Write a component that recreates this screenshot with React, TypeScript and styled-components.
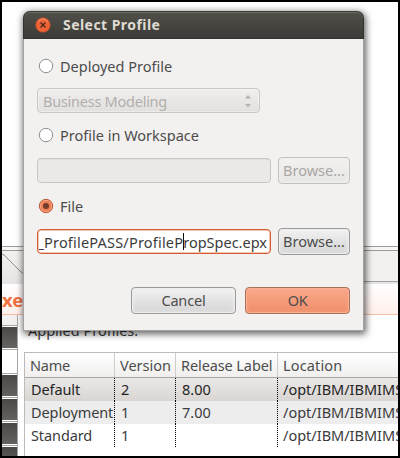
import React from "react";
import styled, { createGlobalStyle, css } from "styled-components";

const Global = createGlobalStyle`
  *, *::before, *::after { box-sizing: border-box; }
  body { margin: 0; overflow: hidden; background: #000; font-family: "Noto Sans", "Open Sans", sans-serif; font-size: 14.5px; color: #4c4c4c; }
  button { font: inherit; color: inherit; margin: 0; padding: 0; }
`;

const Screen = styled.main`
  position: relative;
  width: 400px;
  height: 458px;
  border: 2px solid #000;
  background: #fff;
  overflow: hidden;
  display: flex;
  flex-direction: column;
`;

const Label = styled.span<{ $track?: number }>`
  white-space: pre;
  line-height: 20px;
  letter-spacing: ${(p) => p.$track ?? 0}px;
`;

/* ---- editor window behind the dialog ---- */
const EditorBlank = styled.div`
  flex: 0 0 244px;
`;
const TabStrip = styled.div`
  flex: 0 0 38px;
  border-top: 1px solid #9f9a95;
  background: #f7f6f5;
  padding-top: 3px;
`;
const TabFill = styled.div`
  height: 34px;
  border-top: 1px solid #9f9a95;
  background: linear-gradient(#f2f1f0, #e6e5e4);
  display: flex;
  justify-content: space-between;
`;
const TabRest = styled.div`
  width: 90px;
  background: #f2f1f0;
  border-bottom: 1px solid #a3a19f;
  height: 31px;
`;
const FormHeading = styled.div`
  flex: 0 0 31px;
  display: flex;
  align-items: center;
  border-bottom: 1px solid #f5bda8;
  background: linear-gradient(#fff, #fff0eb);
  color: #f0703f;
  font-weight: 700;
  font-size: 18.5px;
  padding-top: 1px;
`;
const EditorBody = styled.div`
  flex: 1;
  min-height: 0;
  display: flex;
`;
const Rail = styled.div`
  width: 16px;
  border-right: 1px solid #aaa7a3;
  display: flex;
  flex-direction: column;
  height: 141px;
  overflow: hidden;
`;
const RailHead = styled.div`
  flex: 0 0 11px;
  background: #f2f1f0;
  border-bottom: 1px solid #aaa7a3;
`;
const RailGap = styled.div`
  flex: 0 0 25px;
  border-top: 1px solid #aaa7a3;
  border-bottom: 1px solid #aaa7a3;
  width: 16px;
  background: #fff;
`;
const RailCell = styled.div<{ $line?: boolean }>`
  flex: 0 0 ${(p) => (p.$line ? 24 : 23)}px;
  border-top: 1px solid #fff;
  border-bottom: 1px solid ${(p) => (p.$line ? "#aaa7a3" : "#fff")};
  background: linear-gradient(#4a4947, #656361);
  background-clip: padding-box;
  box-shadow: ${(p) => (p.$line ? "inset 0 -1px #fff" : "none")};
`;
const Content = styled.section`
  flex: 1;
  padding-left: 6px;
  display: flex;
  flex-direction: column;
  min-width: 0;
`;
const Caption = styled.div`
  height: 37px;
  padding: 5px 0 0 4px;
  color: #3c3c3c;
`;

/* ---- profile table ---- */
const Table = styled.div`
  flex: 1;
  border: solid #bdbbb8;
  border-width: 1px 0 0 1px;
`;
const Columns = css`
  display: grid;
  grid-template-columns: 90px 61px 102px 1fr;
`;
const HeaderRow = styled.div`
  ${Columns}
  height: 25px;
  border-bottom: 1px solid #a8a5a1;
  background: linear-gradient(#fff, #f0efee);
`;
const HeaderCell = styled.div`
  padding: 2px 0 0 5px;
  overflow: hidden;
  border-right: 1px solid #cfcdca;
  white-space: nowrap;
  &:last-child { border-right: 0; }
`;
const Row = styled.div<{ $tone: "selected" | "alt" | "plain" }>`
  ${Columns}
  height: 23px;
  color: ${(p) => (p.$tone === "selected" ? "#252525" : "#3c3c3c")};
  background: ${(p) =>
    ({ selected: "linear-gradient(#ebe9e8, #d8d5d2)", alt: "#ededed", plain: "#fff" })[p.$tone]};
`;
const Cell = styled.div`
  padding: 1px 0 0 6px;
  overflow: hidden;
  white-space: nowrap;
  background: repeating-linear-gradient(#000 0 1px, transparent 1px 2px) right / 1px 100% no-repeat;
  &:last-child { background: none; padding-left: 5px; }
`;

/* ---- dialog ---- */
const Dialog = styled.div`
  position: absolute;
  left: 21px;
  top: 9px;
  width: 341px;
  height: 320px;
  border-radius: 7px 7px 0 0;
  background: #f2f1f0;
  border: 1px solid #a4a19e;
  border-top: 0;
  box-shadow: 1px 2px 7px 1px rgba(0, 0, 0, 0.62);
`;
const TitleBar = styled.header`
  height: 28px;
  margin: 0 -1px;
  border-radius: 7px 7px 0 0;
  background: linear-gradient(#504f49, #3c3b37);
  border: 1px solid #33322e;
  border-top-color: #3c3b36;
  box-shadow: inset 0 1px #6b6a61;
  display: flex;
  align-items: center;
  padding-left: 11px;
  gap: 12px;
  color: #dfdbd2;
  font-weight: 700;
  font-size: 14px;
`;
const CloseIcon = styled.svg`
  width: 16px;
  height: 16px;
  flex: none;
`;
const DialogBody = styled.div`
  padding: 17px 13px 0 13px;
  display: flex;
  flex-direction: column;
`;
const Option = styled.label`
  height: 20px;
  display: flex;
  align-items: center;
  gap: 6px;
  padding-left: 1px;
  ${Label} { margin-top: -1px; }
`;
const RadioIcon = styled.svg`
  width: 16px;
  height: 16px;
  flex: none;
`;
const Combo = styled.div`
  margin-top: 12px;
  width: 223px;
  height: 25px;
  border: 1px solid #c9c7c5;
  border-radius: 4px;
  background: linear-gradient(#f0efee, #e1e0df);
  box-shadow: inset 0 0 0 1px rgba(255, 255, 255, 0.35);
  color: #b2afac;
  display: flex;
  align-items: center;
  justify-content: space-between;
  padding: 0 7px 0 5px;
`;
const FieldRow = styled.div<{ $top: number }>`
  margin-top: ${(p) => p.$top}px;
  display: flex;
  align-items: center;
  justify-content: space-between;
`;
const Entry = styled.div<{ $focused?: boolean }>`
  width: 234px;
  height: 25px;
  border-radius: 4px;
  border: 1px solid ${(p) => (p.$focused ? "#d45b32" : "#c9c7c5")};
  background: ${(p) => (p.$focused ? "#fff" : "#eae9e8")};
  box-shadow: ${(p) => (p.$focused ? "inset 0 0 0 1px #f6c4b2" : "inset 0 1px #e1e0df")};
  color: #3c3c3c;
  display: flex;
  align-items: center;
  padding: 0 2px 0 1px;
  overflow: hidden;
`;
/* Scrolled text: the end of the path stays in view. */
const EntryText = styled.div`
  flex: 1;
  min-width: 0;
  height: 20px;
  overflow: hidden;
  display: flex;
  align-items: center;
  justify-content: flex-end;
  padding-right: 1px;
`;
const Caret = styled.i`
  flex: none;
  width: 1px;
  height: 17px;
  margin-right: -1px;
  background: #111;
`;
const Button = styled.button<{ $width: number; $primary?: boolean }>`
  width: ${(p) => p.$width}px;
  height: 27px;
  border-radius: 4px;
  border: 1px solid ${(p) => (p.$primary ? "#a9705a" : "#9b9997")};
  background: ${(p) =>
    p.$primary ? "linear-gradient(#fbab8d, #ee8d68)" : "linear-gradient(#f3f2f2, #d5d4d4)"};
  box-shadow: inset 0 0 0 1px ${(p) => (p.$primary ? "#f9b094" : "#efeeee")},
    inset 0 0 5px ${(p) => (p.$primary ? "#f8a587" : "#f0efef")};
  color: #4c4c4c;
  display: flex;
  align-items: center;
  justify-content: center;
  ${Label} { margin-top: -1px; }
  &:disabled {
    color: #aaa7a4;
    border-color: #c4c2c0;
    background: linear-gradient(#f3f2f1, #e6e5e4);
  }
`;
const Actions = styled.div`
  display: flex;
  justify-content: flex-end;
  gap: 9px;
  margin-top: 32px;
`;

const Radio = ({ on }: { on?: boolean }) => (
  <RadioIcon viewBox="0 0 16 16">
    <circle cx="8" cy="8" r="6.7" fill={on ? "#ef7e55" : "#fff"} stroke={on ? "#ba5a38" : "#918f8d"} />
    {on && <circle cx="8" cy="8" r="5.6" fill="none" stroke="#f8a583" />}
    {on && <circle cx="8" cy="8" r="3" fill="#713c2b" />}
  </RadioIcon>
);

const profiles = [
  { name: "Default", version: "2", release: "8.00", tone: "selected" },
  { name: "Deployment", version: "1", release: "7.00", tone: "alt" },
  { name: "Standard", version: "1", release: "", tone: "plain" },
] as const;

export default function App() {
  return (
    <>
      <Global />
      <Screen>
        <EditorBlank />
        <TabStrip>
          <TabFill>
            <svg width="24" height="33" viewBox="0 0 24 33">
              <path d="M0 3 C3 4 4 6 6 8 L18 20 Q20 22 23 23" fill="none" stroke="#8f8b87" />
            </svg>
            <TabRest />
          </TabFill>
        </TabStrip>
        <FormHeading><Label>xed</Label></FormHeading>
        <EditorBody>
          <Rail>
            <RailHead />
            <RailCell />
            <RailGap />
            <RailCell $line />
            <RailCell $line />
            <RailCell $line />
            <RailCell $line />
          </Rail>
          <Content>
            <Caption><Label>Applied Profiles:</Label></Caption>
            <Table>
              <HeaderRow>
                <HeaderCell><Label $track={-0.2}>Name</Label></HeaderCell>
                <HeaderCell><Label>Version</Label></HeaderCell>
                <HeaderCell><Label $track={-0.1}>Release Label</Label></HeaderCell>
                <HeaderCell><Label $track={0.15}>Location</Label></HeaderCell>
              </HeaderRow>
              {profiles.map((p) => (
                <Row key={p.name} $tone={p.tone}>
                  <Cell><Label $track={-0.1}>{p.name}</Label></Cell>
                  <Cell><Label>{p.version}</Label></Cell>
                  <Cell><Label>{p.release}</Label></Cell>
                  <Cell><Label>/opt/IBM/IBMIMS</Label></Cell>
                </Row>
              ))}
            </Table>
          </Content>
        </EditorBody>

        <Dialog role="dialog">
          <TitleBar>
            <CloseIcon viewBox="0 0 16 16">
              <circle cx="8" cy="8" r="7.3" fill="#ee6336" stroke="#b94a25" strokeWidth=".6" />
              <path d="M3 5 Q8 -1 13 5" stroke="#f5926f" fill="none" />
              <path d="M5.5 5.5l5 5M10.500 5.500l-5 5" stroke="#49271b" strokeWidth="1.3" />
            </CloseIcon>
            <Label $track={0.45}>Select Profile</Label>
          </TitleBar>
          <DialogBody>
            <Option><Radio /><Label>Deployed Profile</Label></Option>
            <Combo>
              <Label $track={-0.25}>Business Modeling</Label>
              <svg width="8" height="14" viewBox="0 0 8 14">
                <path d="M1 4.500L4 1l3 3.500zM1 10l3 3.500L7 10z" fill="#b5b3b1" />
              </svg>
            </Combo>
            <FieldRow $top={12}><Option><Radio /><Label>Profile in Workspace</Label></Option></FieldRow>
            <FieldRow $top={12}>
              <Entry />
              <Button $width={72} disabled><Label>Browse...</Label></Button>
            </FieldRow>
            <FieldRow $top={12}><Option><Radio on /><Label>File</Label></Option></FieldRow>
            <FieldRow $top={12}>
              <Entry $focused>
                <EntryText>
                  <Label $track={0.2}>_ProfilePASS/ProfileP</Label>
                  <Caret />
                  <Label>ropSpec.epx</Label>
                </EntryText>
              </Entry>
              <Button $width={72}><Label>Browse...</Label></Button>
            </FieldRow>
            <Actions>
              <Button $width={105}><Label $track={-0.15}>Cancel</Label></Button>
              <Button $width={105} $primary><Label $track={-0.5}>OK</Label></Button>
            </Actions>
          </DialogBody>
        </Dialog>
      </Screen>
    </>
  );
}
